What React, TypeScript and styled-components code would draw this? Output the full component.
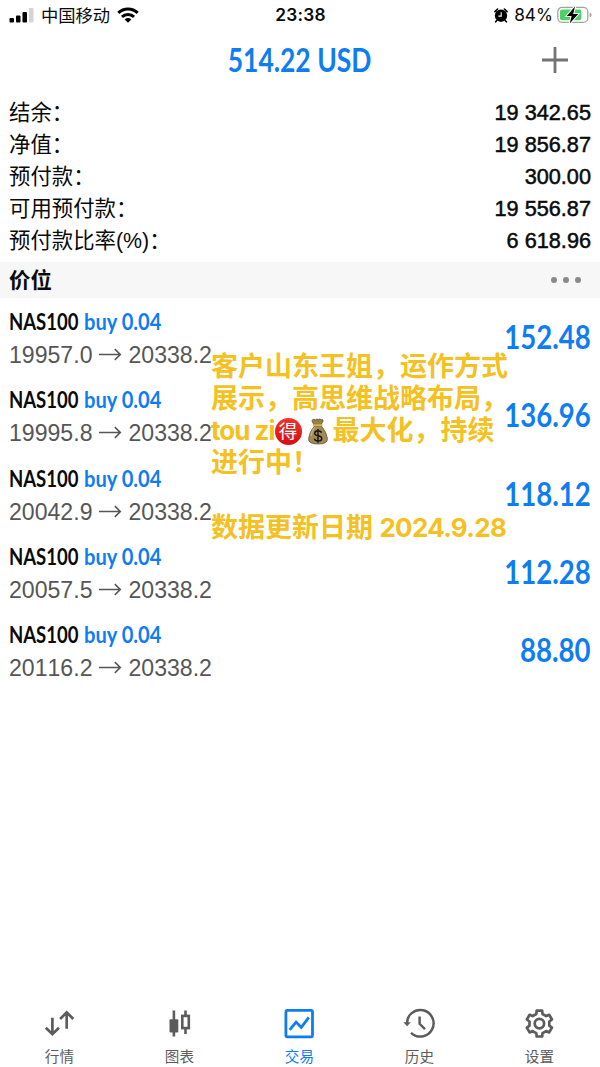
import React from 'react';
import styled, { createGlobalStyle } from 'styled-components';

const BLUE = '#0f7df2';
const GREY = '#5c5c5c';

const GlobalStyle = createGlobalStyle`
  * { box-sizing: border-box; }
  body {
    margin: 0;
    background: #fff;
    font-family: 'Liberation Sans', 'Noto Sans CJK SC', sans-serif;
    color: #0a0a0a;
  }
`;

const Screen = styled.main`
  position: relative;
  width: 600px;
  height: 1067px;
  display: flex;
  flex-direction: column;
  overflow: hidden;
  background: #fff;
`;

const StatusBar = styled.header`
  height: 30px;
  flex: none;
  display: grid;
  grid-template-columns: 1fr auto 1fr;
  align-items: center;
  padding: 0 8px 0 9px;
  font-family: Inter, 'Noto Sans CJK SC', sans-serif;
  font-size: 17px;
  line-height: 30px;
`;

const StatusGroup = styled.div<{ $end?: boolean }>`
  display: flex;
  align-items: center;
  height: 30px;
  justify-content: ${p => (p.$end ? 'flex-end' : 'flex-start')};
  gap: 7px;
`;

const Carrier = styled.span`
  font-size: 17.3px;
  padding-top: 1px;
`;

const Clock = styled.span`
  font-weight: 600;
  font-size: 17.3px;
  letter-spacing: 0.2px;
`;

const Percent = styled.span`
  font-size: 17.3px;
  margin: 0 -3px 0 -1px;
`;

const TitleBar = styled.div`
  height: 66px;
  flex: none;
  display: grid;
  grid-template-columns: 1fr auto 1fr;
  align-items: center;
  padding: 0 31px 6px;
  line-height: 60px;
  svg { justify-self: end; }
`;

const Condensed = styled.span<{ $size: number; $scale: number; $color: string; $origin?: string }>`
  display: inline-block;
  font-family: Lato, sans-serif;
  font-weight: 700;
  font-size: ${p => p.$size}px;
  color: ${p => p.$color};
  white-space: nowrap;
  transform: scaleX(${p => p.$scale});
  transform-origin: ${p => p.$origin ?? 'left'} center;
`;

const Summary = styled.dl`
  margin: 0;
  padding: 1px 9px 0;
  height: 166px;
  flex: none;
`;

const SummaryRow = styled.div`
  display: flex;
  justify-content: space-between;
  height: 32px;
  line-height: 32px;
  font-size: 21.7px;
`;

const Label = styled.dt`
  font-size: 21.4px;
`;

const Amount = styled.dd`
  margin: 0;
  -webkit-text-stroke: 0.5px #0a0a0a;
`;

const SectionBar = styled.div`
  height: 36px;
  flex: none;
  display: flex;
  align-items: center;
  justify-content: space-between;
  padding: 0 19px 0 9px;
  background: #f7f7f7;
  font-size: 21.4px;
  font-weight: 700;
`;

const SectionTitle = styled.span`
  padding-top: 1px;
  line-height: 36px;
`;

const Dots = styled.div`
  display: flex;
  gap: 6px;
`;

const Dot = styled.i`
  width: 6px;
  height: 6px;
  border-radius: 50%;
  background: #8a8a8a;
`;

const Positions = styled.ul`
  list-style: none;
  margin: 0;
  padding: 2px 9px 0;
  flex: 1;
`;

const Position = styled.li`
  height: 78.26px;
  display: flex;
  justify-content: space-between;
`;

const Details = styled.div`
  padding-top: 5px;
`;

const Heading = styled.div`
  height: 33px;
  line-height: 33px;
  display: flex;
`;

const Symbol = styled.div`
  width: 75px;
`;

const Prices = styled.div`
  display: flex;
  align-items: center;
  gap: 6px;
  height: 34px;
  line-height: 34px;
  font-size: 23.1px;
  font-kerning: none;
  color: #565656;
`;

const Profit = styled.div`
  line-height: 74px;
`;

const Note = styled.aside`
  position: absolute;
  left: 211px;
  top: 351px;
  width: 310px;
  font-family: Inter, 'Noto Sans CJK SC', sans-serif;
  font-size: 27px;
  font-weight: 700;
  color: #f4c022;
`;

const NoteLine = styled.div`
  display: flex;
  align-items: center;
  height: 32.1px;
  line-height: 32px;
  white-space: pre;
`;

const Latin = styled.span<{ $spacing: number }>`
  font-size: 26px;
  letter-spacing: ${p => p.$spacing}px;
`;

const RedBadge = styled.span`
  width: 27px;
  height: 27px;
  flex: none;
  border-radius: 50%;
  background: linear-gradient(#f2332f, #d60d10);
  color: #fff;
  font-size: 18.5px;
  font-weight: 400;
  line-height: 26px;
  text-align: center;
`;

const Bag = styled.span`
  display: flex;
  width: 31px;
  flex: none;
  padding-left: 5px;
`;

const TabBar = styled.nav`
  height: 67px;
  flex: none;
  display: grid;
  grid-template-columns: repeat(5, 120px);
  margin-left: -0.6px;
  padding-top: 7px;
`;

const Tab = styled.div<{ $active?: boolean }>`
  display: flex;
  flex-direction: column;
  align-items: center;
  color: ${p => (p.$active ? BLUE : GREY)};
  font-size: 14.6px;
  line-height: 22px;
  gap: 7px;
  svg { display: block; }
`;

const Signal = () => (
  <svg width="25" height="16" viewBox="0 0 25 16">
    <rect x="0.5" y="11" width="4.5" height="4.5" rx="1" fill="#000" />
    <rect x="7" y="8.5" width="4.5" height="7" rx="1" fill="#000" />
    <rect x="13.5" y="5" width="4.5" height="10.5" rx="1" fill="#000" />
    <rect x="20" y="1" width="4.5" height="14.5" rx="1" fill="#d4d4d4" />
  </svg>
);

const Wifi = () => (
  <svg width="22" height="16" viewBox="0 0 22 16" fill="none" stroke="#000" strokeWidth="3">
    <path d="M1.3 5.9a13.8 13.8 0 0 1 19.4 0" />
    <path d="M5 9.9a8.6 8.6 0 0 1 12 0" />
    <path d="M11 15.8l-3.3-3.4a4.7 4.7 0 0 1 6.6 0z" fill="#000" stroke="none" />
  </svg>
);

const Alarm = () => (
  <svg width="14" height="15" viewBox="0 0 14 15">
    <circle cx="7" cy="7.7" r="6.2" fill="#000" />
    <path d="M.9 3.6L3.6 1M13.1 3.6L10.4 1M3 12.2l-1.3 1.6M11 12.2l1.3 1.6" stroke="#000" strokeWidth="1.6" strokeLinecap="round" />
    <path d="M7.2 4.2v3.9H4.4" fill="none" stroke="#fff" strokeWidth="1.1" />
  </svg>
);

const Battery = () => (
  <svg width="35" height="20" viewBox="0 0 35 20">
    <rect x="0.8" y="2.4" width="30" height="15" rx="4.4" fill="#fff" stroke="#a3a3a3" strokeWidth="1.3" />
    <rect x="2.9" y="4.5" width="21.5" height="10.8" rx="2.4" fill="#4cd167" />
    <path d="M32.6 7.6q2 .6 2 2.4t-2 2.4z" fill="#a3a3a3" />
    <path d="M18 1.6L9.8 11h4.8l-1.9 7.6L21.2 9h-5z" fill="#000" stroke="#fff" strokeWidth="2" paintOrder="stroke" />
  </svg>
);

const Plus = () => (
  <svg width="28" height="28" viewBox="0 0 28 28" stroke="#737373" strokeWidth="2.8">
    <path d="M14 1v26M1 14h26" />
  </svg>
);

const Arrow = () => (
  <svg width="24" height="14" viewBox="0 0 24 14" fill="none" stroke="#565656" strokeWidth="1.6">
    <path d="M1 6.5h21M16.8 1.2l5.5 5.3-5.5 5.3" />
  </svg>
);

const MoneyBag = () => (
  <svg width="22" height="27" viewBox="0 0 22 27">
    <path d="M7.2 6.8Q4.2 3 5.5 1.8 7 .6 8.5 1.9 10 .3 11.3 1.6 13 .3 14.2 1.7q2.6-.5 1.8 1.5L14 6.8z" fill="#958050" stroke="#5d4c2b" strokeWidth=".8" />
    <path d="M7.5 8Q2.4 14 1.6 20.4q-.6 5.6 9.4 5.6t9.4-5.6Q19.6 14 14.3 8z" fill="#a08b59" stroke="#65532f" strokeWidth=".8" />
    <path d="M4 18Q5 12 8 9.5" fill="none" stroke="#c2af80" strokeWidth="1.5" />
    <path d="M6.8 7.3h7.8" stroke="#d8b343" strokeWidth="2" strokeLinecap="round" />
    <path d="M14.5 14.8q-.6-2-3.4-2-3.4 0-3.4 2.4 0 2 3.4 2.5 3.7.5 3.7 2.8 0 2.5-3.7 2.5-3.3 0-3.8-2.3M11 11v13.7" fill="none" stroke="#191510" strokeWidth="1.4" />
  </svg>
);

const QuotesIcon = () => (
  <svg width="32" height="32" viewBox="0 0 32 32" fill="none" stroke={GREY} strokeWidth="2.7">
    <path d="M9.4 10.7v16M2.8 20.7l6.6 6.5 6.6-6.5M23.7 21.7V6M17.1 12l6.6-6.6 6.6 6.6" />
  </svg>
);

const ChartsIcon = () => (
  <svg width="32" height="32" viewBox="0 0 32 32" fill="none" stroke={GREY} strokeWidth="2.6">
    <path d="M10.9 3.5v26M22.5 3.5v5M22.5 21v6" />
    <rect x="6.5" y="12.2" width="8.8" height="13.4" rx="1" fill={GREY} stroke="none" />
    <rect x="19.3" y="8.9" width="6.5" height="12.2" />
  </svg>
);

const TradeIcon = () => (
  <svg width="32" height="32" viewBox="0 0 32 32" fill="none" stroke={BLUE} strokeWidth="2.8">
    <rect x="2.9" y="3.4" width="26.6" height="26.4" rx="1.5" />
    <path d="M6.7 22.8l6.4-7.7 5.2 5.3L25.8 10.3" />
  </svg>
);

const HistoryIcon = () => (
  <svg width="32" height="32" viewBox="0 0 32 32" fill="none" stroke={GREY} strokeWidth="2.5">
    <path d="M4 17A13.3 13.3 0 1 1 8 25.8" />
    <path d="M.4 15.2h7.4L4.1 19.3z" fill={GREY} stroke="none" />
    <path d="M16.6 9.4v7.4l5.4 5.4" />
  </svg>
);

// Outline of a six-toothed gear: concave sides between narrow teeth.
const GEAR = Array.from({ length: 6 }, (_, i) => {
  const profile: [number, number][] = [[-30, 9.9], [-18, 10.1], [-12, 13.2], [12, 13.2], [18, 10.1]];
  return profile.map(([deg, r]) => {
    const a = ((i * 60 + deg - 90) * Math.PI) / 180;
    return `${(16.4 + r * Math.cos(a)).toFixed(2)},${(16.6 + r * Math.sin(a)).toFixed(2)}`;
  });
}).flat().join(' ');

const SettingsIcon = () => (
  <svg width="32" height="32" viewBox="0 0 32 32" fill="none" stroke={GREY} strokeWidth="2.7" strokeLinejoin="round">
    <polygon points={GEAR} />
    <circle cx="16.4" cy="16.6" r="4.7" />
  </svg>
);

const summary = [
  ['结余：', '19 342.65'],
  ['净值：', '19 856.87'],
  ['预付款：', '300.00'],
  ['可用预付款：', '19 556.87'],
  ['预付款比率(%)：', '6 618.96'],
];

const positions = [
  ['19957.0', '152.48'],
  ['19995.8', '136.96'],
  ['20042.9', '118.12'],
  ['20057.5', '112.28'],
  ['20116.2', '88.80'],
];

const tabs = [
  { label: '行情', Icon: QuotesIcon },
  { label: '图表', Icon: ChartsIcon },
  { label: '交易', Icon: TradeIcon, active: true },
  { label: '历史', Icon: HistoryIcon },
  { label: '设置', Icon: SettingsIcon },
];

export default function App() {
  return (
    <>
      <GlobalStyle />
      <Screen>
        <StatusBar>
          <StatusGroup>
            <Signal />
            <Carrier>中国移动</Carrier>
            <Wifi />
          </StatusGroup>
          <Clock>23:38</Clock>
          <StatusGroup $end>
            <Alarm />
            <Percent>84%</Percent>
            <Battery />
          </StatusGroup>
        </StatusBar>
        <TitleBar>
          <span />
          <Condensed $size={31.5} $scale={0.84} $color={BLUE} $origin="center">514.22 USD</Condensed>
          <Plus />
        </TitleBar>
        <Summary>
          {summary.map(([label, value]) => (
            <SummaryRow key={label}>
              <Label>{label}</Label>
              <Amount>{value}</Amount>
            </SummaryRow>
          ))}
        </Summary>
        <SectionBar>
          <SectionTitle>价位</SectionTitle>
          <Dots><Dot /><Dot /><Dot /></Dots>
        </SectionBar>
        <Positions>
          {positions.map(([open, profit]) => (
            <Position key={open}>
              <Details>
                <Heading>
                  <Symbol>
                    <Condensed $size={22.3} $scale={0.83} $color="#0a0a0a">NAS100</Condensed>
                  </Symbol>
                  <Condensed $size={22.3} $scale={0.9} $color={BLUE}>buy 0.04</Condensed>
                </Heading>
                <Prices>{open}<Arrow />20338.2</Prices>
              </Details>
              <Profit>
                <Condensed $size={31.5} $scale={0.875} $color={BLUE} $origin="right">{profit}</Condensed>
              </Profit>
            </Position>
          ))}
        </Positions>
        <Note>
          <NoteLine>客户山东王姐，运作方式</NoteLine>
          <NoteLine>展示，高思维战略布局，</NoteLine>
          <NoteLine>
            <Latin $spacing={-1}>tou zi</Latin>
            <RedBadge>得</RedBadge>
            <Bag><MoneyBag /></Bag>
            最大化，持续
          </NoteLine>
          <NoteLine>进行中！</NoteLine>
          <NoteLine />
          <NoteLine>数据更新日期 <Latin $spacing={-0.7}>2024.9.28</Latin></NoteLine>
        </Note>
        <TabBar>
          {tabs.map(({ label, Icon, active }) => (
            <Tab key={label} $active={active}>
              <Icon />
              {label}
            </Tab>
          ))}
        </TabBar>
      </Screen>
    </>
  );
}
